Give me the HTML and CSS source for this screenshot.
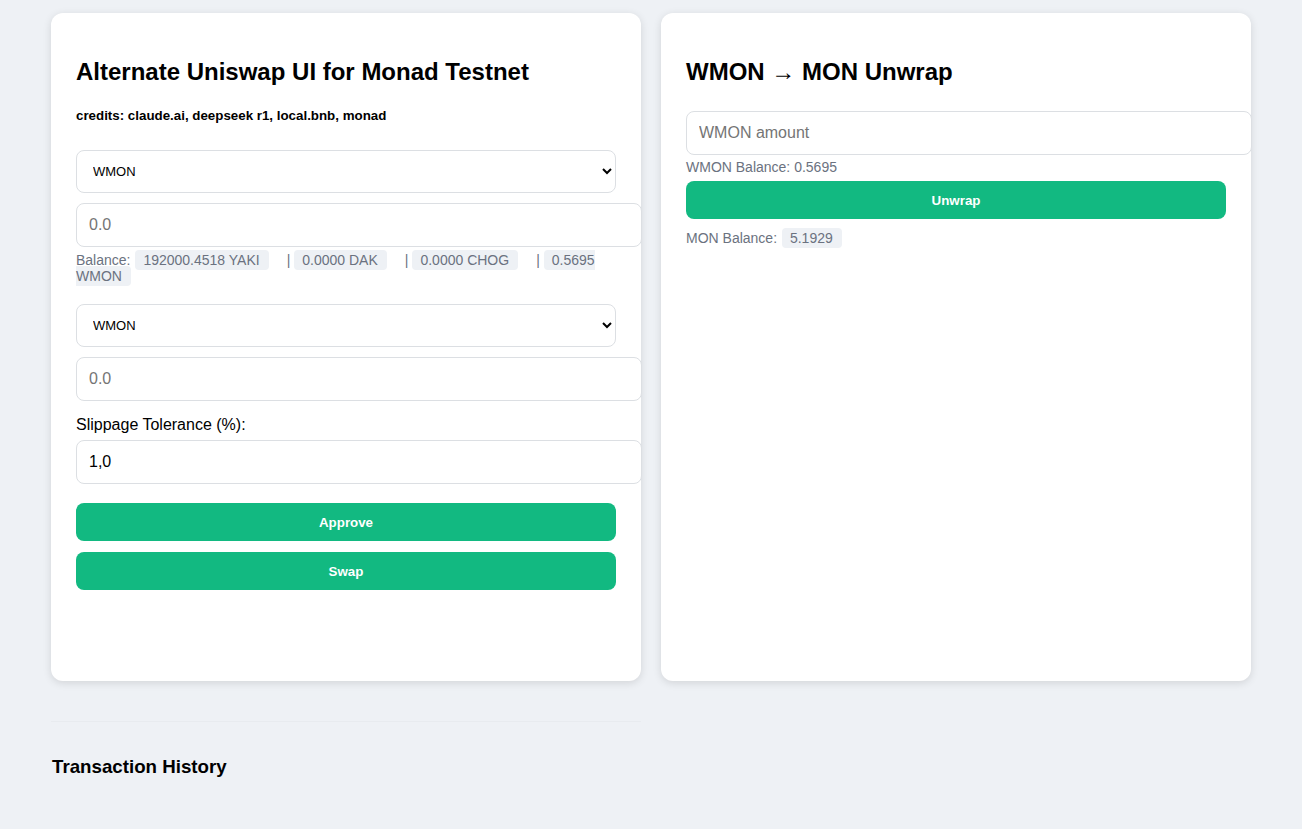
FILE: index.html
```html
<!DOCTYPE html>
<html>
<head>
<meta charset="utf-8">
<title>Alternate Uniswap UI for Monad Testnet</title>
<link rel="stylesheet" href="styles.css">
</head>
<body>
<div class="container">
  <div class="grid">
    <div class="card">
      <h2 class="title">Alternate Uniswap UI for Monad Testnet</h2>
      <p class="credits">credits: claude.ai, deepseek r1, local.bnb, monad</p>
      <select class="select sel-first">
        <option>WMON</option>
        <option>YAKI</option>
        <option>DAK</option>
        <option>CHOG</option>
      </select>
      <input class="field" type="text" placeholder="0.0">
      <div class="balance">Balance: <span class="badge">192000.4518 YAKI</span><span class="sep">|</span><span class="badge">0.0000 DAK</span><span class="sep">|</span><span class="badge">0.0000 CHOG</span><span class="sep">|</span><span class="badge">0.5695 WMON</span></div>
      <select class="select sel-second">
        <option>WMON</option>
        <option>YAKI</option>
        <option>DAK</option>
        <option>CHOG</option>
      </select>
      <input class="field" type="text" placeholder="0.0">
      <label class="label">Slippage Tolerance (%):</label>
      <input class="field field-value" type="text" value="1,0">
      <button class="btn btn-approve">Approve</button>
      <button class="btn btn-swap">Swap</button>
    </div>
    <div class="card">
      <h2 class="title">WMON → MON Unwrap</h2>
      <input class="field field-unwrap" type="text" placeholder="WMON amount">
      <div class="info">WMON Balance: 0.5695</div>
      <button class="btn btn-unwrap">Unwrap</button>
      <div class="info info-mon">MON Balance: <span class="badge">5.1929</span></div>
    </div>
    <div class="history">
      <h3 class="history-title">Transaction History</h3>
    </div>
  </div>
</div>
</body>
</html>
```
FILE: styles.css
```css
html, body {
  margin: 0;
  padding: 0;
}
body {
  background: #eef1f5;
  font-family: "Liberation Sans", Arial, sans-serif;
  color: #000;
}
.container {
  max-width: 1200px;
  margin: 0 auto;
  padding-top: 13px;
}
.grid {
  display: grid;
  grid-template-columns: 1fr 1fr;
  column-gap: 20px;
  row-gap: 40px;
}
.card {
  background: #fff;
  border-radius: 12px;
  box-shadow: 0 2px 8px rgba(0, 0, 0, 0.12);
  padding: 25px;
  min-height: 668px;
  box-sizing: border-box;
}
.title {
  font-size: 24px;
  font-weight: bold;
  margin: 20px 0 20px;
  line-height: 28px;
}
.credits {
  font-size: 13.33px;
  font-weight: bold;
  margin: 0 0 29px;
  line-height: 15px;
  position: relative;
  top: 2px;
}
.select {
  display: block;
  width: 100%;
  height: 43px;
  padding: 0 12px;
  border: 1px solid #dcdfe3;
  border-radius: 8px;
  background: #fff;
  font-family: "Liberation Sans", Arial, sans-serif;
  font-size: 13px;
  color: #000;
  margin: 0 0 10px;
}
.sel-second {
  margin-top: 20px;
}
.field {
  display: block;
  width: 100%;
  padding: 12px;
  border: 1px solid #dcdfe3;
  border-radius: 8px;
  font-family: "Liberation Sans", Arial, sans-serif;
  font-size: 16px;
  line-height: 18px;
  height: 18px;
  margin: 0;
  color: #000;
  background: #fff;
}
.field::placeholder {
  color: #757575;
}
.balance {
  margin-top: 5px;
  font-size: 14px;
  line-height: 16px;
  color: #6b7280;
}
.badge {
  background: #eef1f5;
  border-radius: 4px;
  padding: 2px 9px 2px 8px;
  margin-left: 1px;
}
.sep {
  display: inline-block;
  margin: 0 3px 0 18px;
}
.label {
  display: block;
  font-size: 16px;
  line-height: 18px;
  margin: 15px 0 6px;
}
.btn {
  display: block;
  width: 100%;
  height: 38px;
  border: none;
  border-radius: 8px;
  background: #12b981;
  color: #fff;
  font-family: "Liberation Sans", Arial, sans-serif;
  font-size: 13.33px;
  font-weight: bold;
  cursor: pointer;
}
.btn-approve {
  margin-top: 19px;
}
.btn-swap {
  margin-top: 11px;
}
.field-unwrap {
  margin-top: 25px;
}
.info {
  font-size: 14px;
  line-height: 16px;
  color: #6b7280;
  margin-top: 4px;
}
.btn-unwrap {
  margin-top: 6px;
}
.info-mon {
  margin-top: 11px;
}
.history {
  border-top: 1px solid #e8ebef;
  padding-top: 14px;
}
.history-title {
  font-size: 18.72px;
  font-weight: bold;
  margin: 20px 0 0 1px;
  line-height: 22px;
}
```
